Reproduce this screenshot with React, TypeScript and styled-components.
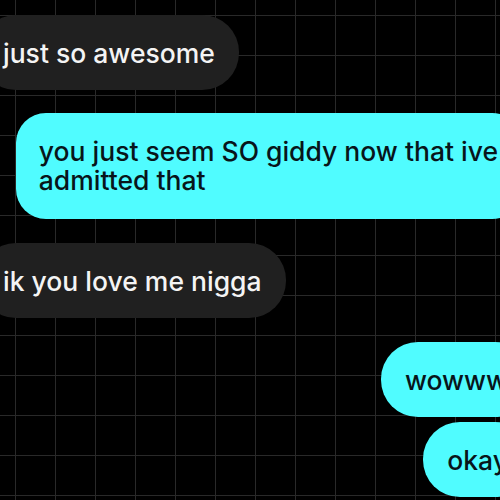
import React from "react";
import styled, { createGlobalStyle } from "styled-components";

const Global = createGlobalStyle`
  html, body { margin: 0; padding: 0; background: #000; }
  body { font-family: Inter, "Noto Sans", "Liberation Sans", sans-serif; }
`;

const Screen = styled.div`
  width: 500px;
  height: 500px;
  overflow: hidden;
  background-color: #000;
  background-image:
    linear-gradient(to right, #292929 1px, transparent 1px),
    linear-gradient(to bottom, #292929 1px, transparent 1px);
  background-size: 40px 40px;
  background-position: 15px 15px;
  display: flex;
  flex-direction: column;
  padding-top: 15px;
  box-sizing: border-box;
`;

const Row = styled.div<{ $side: "left" | "right"; $gap: number; $bleed: number }>`
  display: flex;
  justify-content: ${(p) => (p.$side === "left" ? "flex-start" : "flex-end")};
  margin-top: ${(p) => p.$gap}px;
  ${(p) =>
    p.$side === "left" ? `margin-left: -${p.$bleed}px;` : `margin-right: -${p.$bleed}px;`}
`;

const Bubble = styled.div<{ $side: "left" | "right" }>`
  flex: none;
  padding: 0 24px;
  height: 75px;
  box-sizing: border-box;
  display: flex;
  align-items: center;
  border-radius: 37px;
  font-size: 26.5px;
  font-weight: 500;
  line-height: 28px;
  white-space: nowrap;
  background: ${(p) => (p.$side === "left" ? "#202020" : "#50fcff")};
  color: ${(p) => (p.$side === "left" ? "#f4f4f4" : "#08151a")};
`;

const Multi = styled(Bubble)`
  height: 106px;
  border-radius: 30px;
  line-height: 29px;
  padding: 0 24px 0 23px;
`;

export default function App() {
  return (
    <>
      <Global />
      <Screen>
        <Row $side="left" $gap={0} $bleed={21}>
          <Bubble $side="left">just so awesome</Bubble>
        </Row>
        <Row $side="right" $gap={23} $bleed={22}>
          <Multi $side="right">
            <span>
              you just seem SO giddy now that ive
              <br />
              admitted that
            </span>
          </Multi>
        </Row>
        <Row $side="left" $gap={24} $bleed={21}>
          <Bubble $side="left">ik you love me nigga</Bubble>
        </Row>
        <Row $side="right" $gap={24} $bleed={32}>
          <Bubble $side="right">wowww</Bubble>
        </Row>
        <Row $side="right" $gap={5} $bleed={32}>
          <Bubble $side="right">okay</Bubble>
        </Row>
      </Screen>
    </>
  );
}
